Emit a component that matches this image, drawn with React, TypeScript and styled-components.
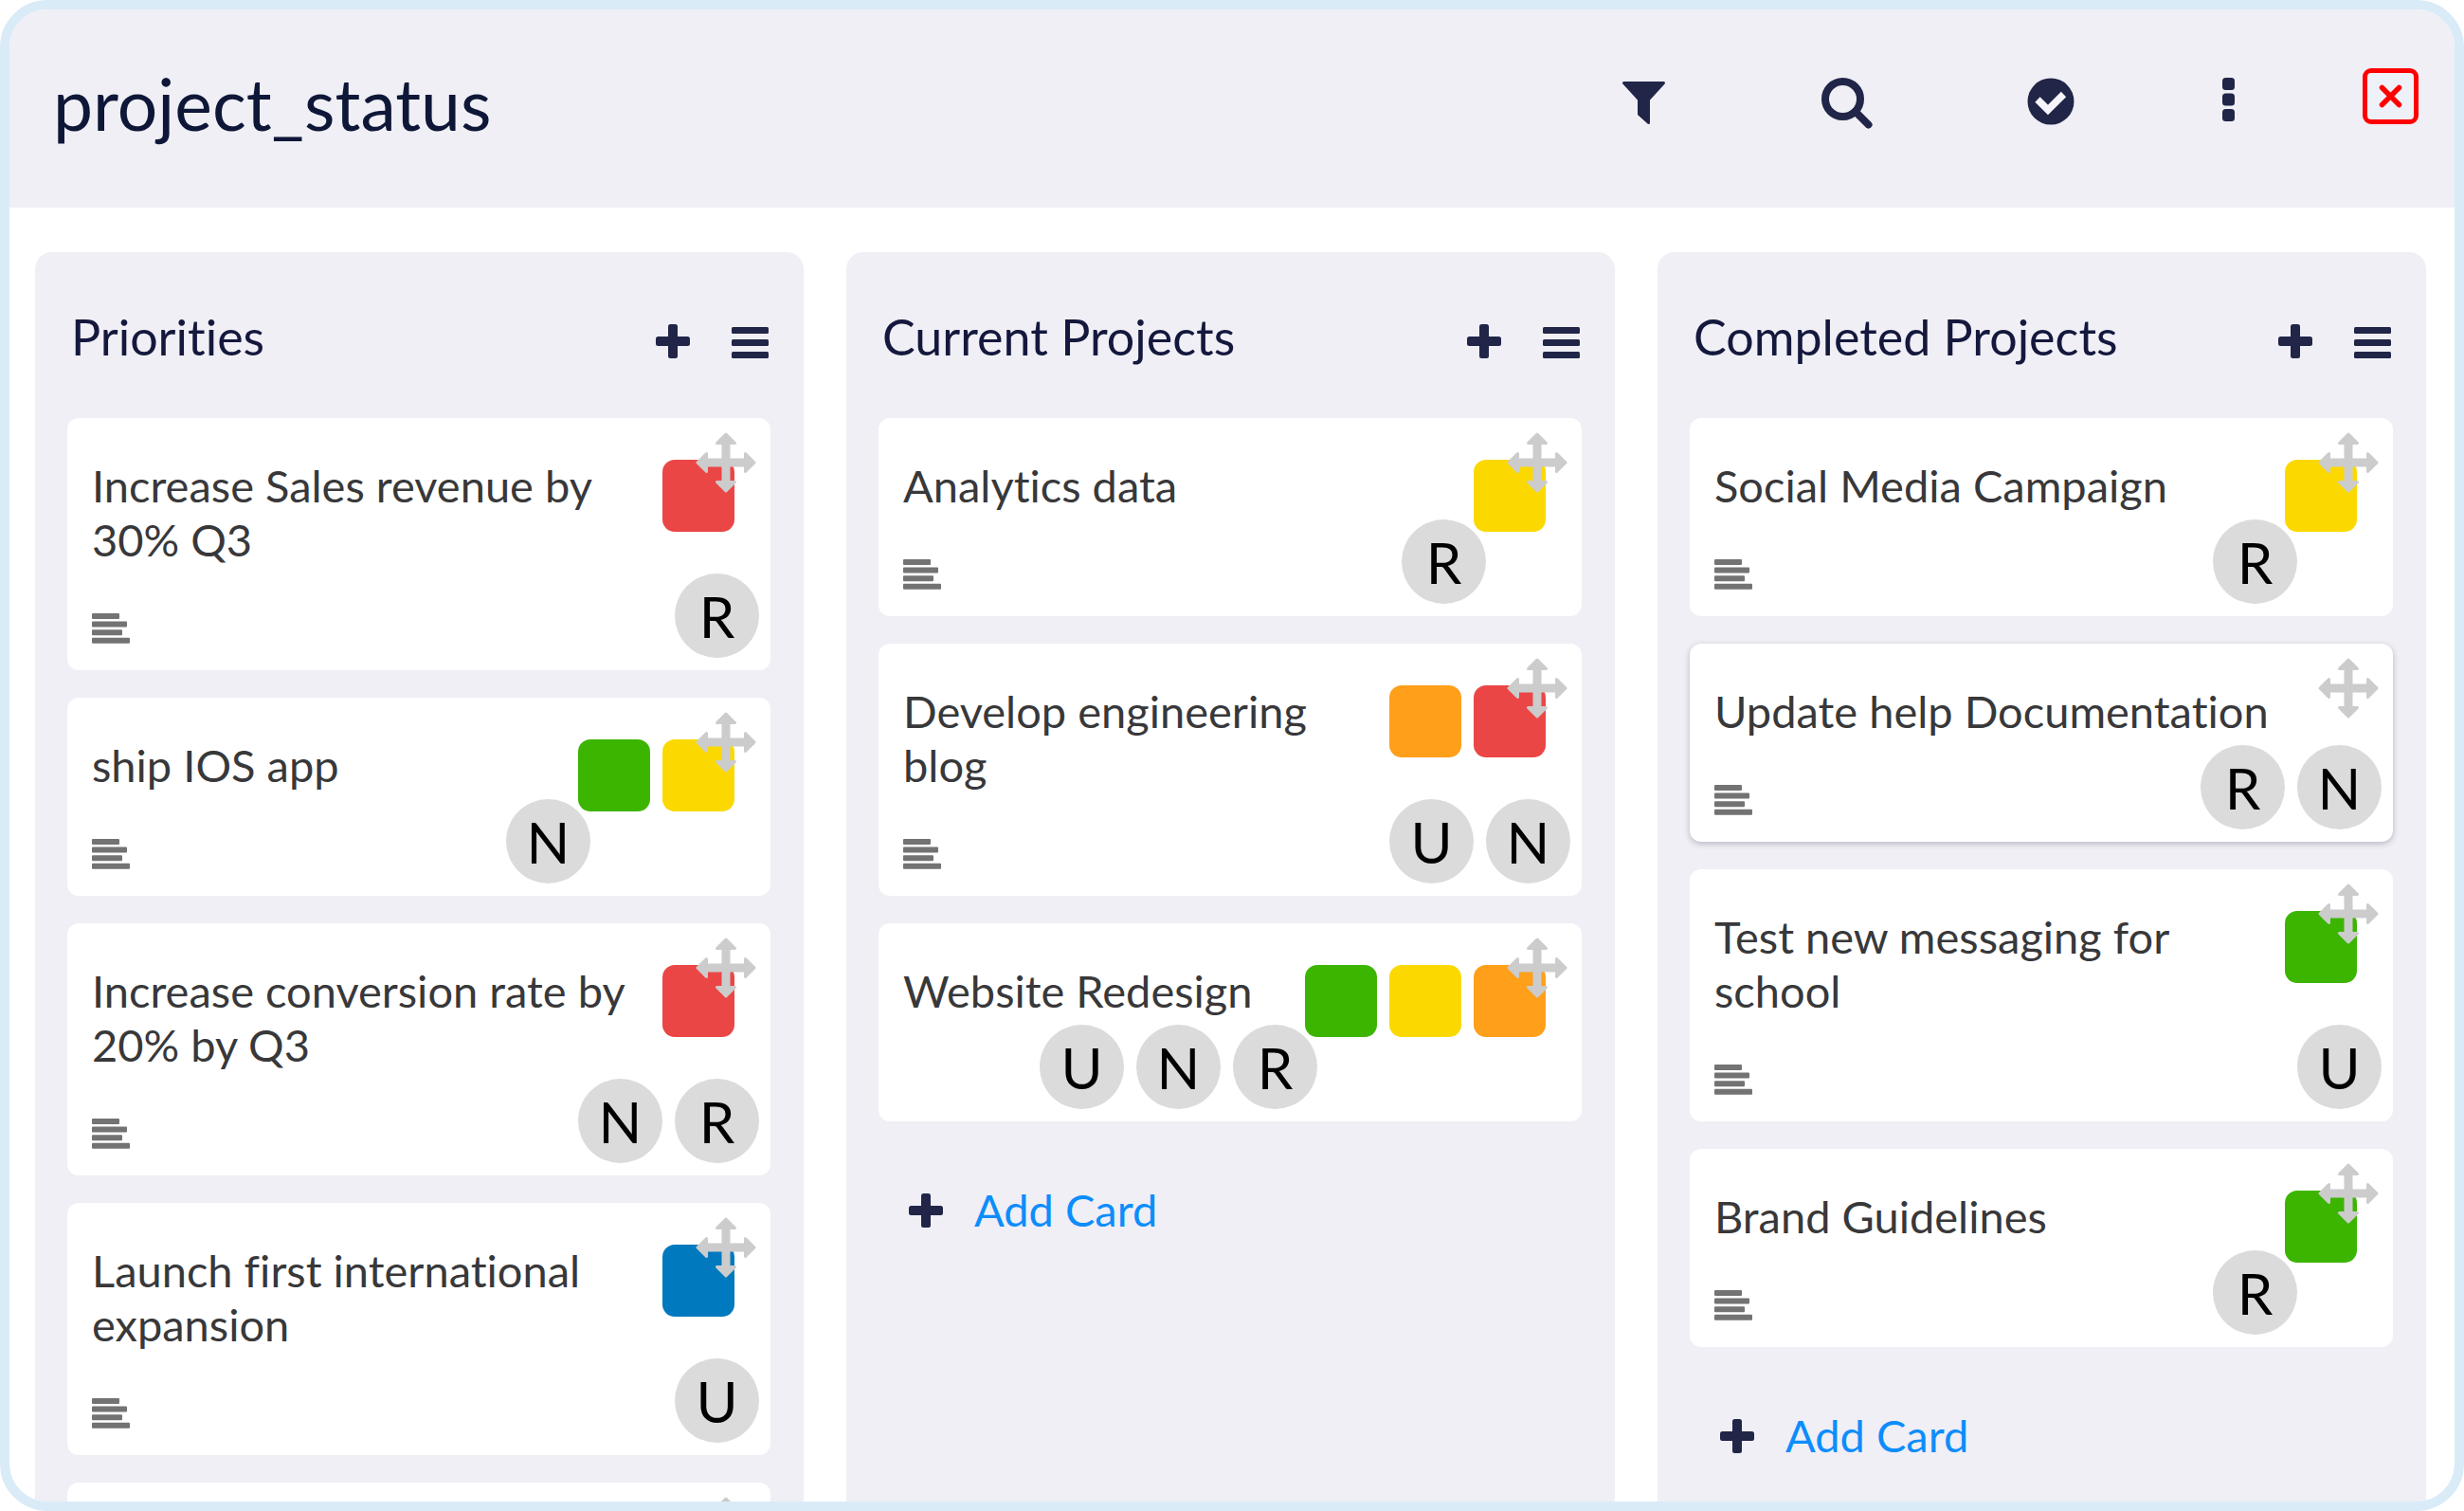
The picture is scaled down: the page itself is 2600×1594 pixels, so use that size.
import React from "react";
import styled, { createGlobalStyle } from "styled-components";

const font = `Lato, "Open Sans", "Noto Sans", sans-serif`;

const GlobalStyle = createGlobalStyle`
  *, *::before, *::after { box-sizing: border-box; }
  html, body { margin: 0; background: #fff; }
  body { font-family: ${font}; font-variant-ligatures: none; }
  button { font: inherit; border: 0; padding: 0; background: none; cursor: pointer; }
  h1, h2, h3, ul { margin: 0; padding: 0; font-weight: inherit; list-style: none; }
  svg { display: block; flex: none; }
`;

const Frame = styled.main`
  display: flex;
  flex-direction: column;
  height: 100vh;
  border: 10px solid #d9ebf7;
  border-radius: 50px;
  background: #fff;
  overflow: hidden;
`;

const Header = styled.header`
  display: flex;
  align-items: flex-start;
  justify-content: space-between;
  flex: none;
  height: 209px;
  padding: 54px 38px 0 46px;
  background: #efeff5;
`;

const BoardTitle = styled.h1`
  font-size: 75px;
  line-height: 90px;
  color: #0f1738;
`;

const Toolbar = styled.div`
  display: flex;
  align-items: flex-start;
  gap: 135px;
  padding-top: 8px;
`;

const Tools = styled.div<{ $gap: number }>`
  display: flex;
  align-items: flex-start;
  gap: ${(p) => p.$gap}px;
`;

const IconButton = styled.button`
  display: flex;
  align-items: center;
  justify-content: center;
  color: #212548;
`;

const ToolButton = styled(IconButton)<{ $width: number }>`
  width: ${(p) => p.$width}px;
  margin-top: 10px;
`;

const Board = styled.div`
  display: grid;
  grid-template-columns: repeat(3, 1fr);
  gap: 45px;
  flex: 1;
  min-height: 0;
  padding: 47px 30px 0 27px;
`;

const Column = styled.section`
  min-height: 0;
  padding: 47px 35px 0 34px;
  border-radius: 18px 18px 0 0;
  background: #efeff5;
`;

const ColumnHeader = styled.div`
  display: flex;
  align-items: center;
  gap: 44px;
  height: 94px;
  margin-bottom: 34px;
  padding: 0 2px 0 4px;
`;

const ColumnTitle = styled.h2`
  flex: 1;
  padding-bottom: 10px;
  font-size: 52px;
  line-height: 64px;
  color: #15183d;
`;

const CardList = styled.ul`
  display: flex;
  flex-direction: column;
  gap: 29px;
`;

const CardBox = styled.li<{ $raised?: boolean }>`
  position: relative;
  padding: 43px 12px 13px 26px;
  border-radius: 12px;
  background: #fff;
  box-shadow: ${(p) => (p.$raised ? "0 2px 6px rgba(40, 36, 70, 0.28)" : "none")};
`;

const CardTop = styled.div`
  display: flex;
  align-items: flex-start;
  gap: 20px;
  padding-right: 26px;
`;

const CardTitle = styled.h3`
  flex: 1;
  min-height: 57px;
  font-size: 47px;
  line-height: 57px;
  color: #38383a;
`;

const Labels = styled.div`
  display: flex;
  gap: 13px;
  height: 57px;
  padding-top: 1px;
`;

const Label = styled.span<{ $color: string }>`
  width: 76px;
  height: 76px;
  border-radius: 13px;
  background: ${(p) => p.$color};
`;

const MoveButton = styled(IconButton)`
  position: absolute;
  top: 15px;
  right: 15px;
  color: #ccc;
`;

const CardFooter = styled.div`
  position: relative;
  display: flex;
  align-items: flex-end;
  justify-content: space-between;
  height: 89px;
  margin-top: 7px;
`;

const DescriptionMark = styled.svg`
  width: 40px;
  height: 32px;
  margin-bottom: 15px;
  fill: #737373;
`;

const Avatars = styled.div<{ $labels: number }>`
  display: flex;
  gap: 13px;
  margin-left: auto;
  margin-right: ${(p) => p.$labels * 89}px;
`;

const Avatar = styled.span`
  display: flex;
  align-items: center;
  justify-content: center;
  width: 89px;
  height: 89px;
  border-radius: 50%;
  background: #dbdbdb;
  color: #000;
  font-size: 60px;
  line-height: 72px;
`;

const AddCard = styled.button`
  display: flex;
  align-items: center;
  gap: 33px;
  margin: 65px 0 0 32px;
  font-size: 47px;
  line-height: 57px;
  color: #0d8dfb;

  svg {
    color: #212548;
  }
`;

const FilterIcon = () => (
  <svg width="45" height="54" viewBox="0 0 45 54" fill="currentColor" stroke="currentColor" strokeWidth="3" strokeLinejoin="round">
    <path d="M1.500 5.500H43.500L27.500 23V47.500L17.500 38.500V23Z" />
  </svg>
);

const SearchIcon = () => (
  <svg width="54" height="54" viewBox="0 0 54 54" fill="none" stroke="currentColor" strokeWidth="8" strokeLinecap="round">
    <circle cx="22.5" cy="22.5" r="18.5" />
    <path d="M36.500 36.500L49.500 49.500" />
  </svg>
);

const CheckIcon = () => (
  <svg width="50" height="50" viewBox="0 0 50 50" fill="none">
    <circle cx="25" cy="25" r="24.500" fill="currentColor" />
    <path d="M11 23L22 34L38.500 17.500" stroke="#f4f4fa" strokeWidth="7.500" />
  </svg>
);

const MoreIcon = () => (
  <svg width="13" height="46" viewBox="0 0 13 46" fill="currentColor">
    <rect width="13" height="13" rx="3.500" />
    <rect y="16.500" width="13" height="13" rx="3.500" />
    <rect y="33" width="13" height="13" rx="3.500" />
  </svg>
);

const CloseIcon = () => (
  <svg width="59" height="59" viewBox="0 0 59 59" fill="none" stroke="#fe0000">
    <rect x="2.500" y="2.500" width="54" height="54" rx="6.500" strokeWidth="5" fill="#eff1f8" />
    <path d="M20.500 20.500L38.500 38.500M38.500 20.500L20.500 38.500" strokeWidth="5.500" strokeLinecap="round" />
  </svg>
);

const PlusIcon = () => (
  <svg width="36" height="36" viewBox="0 0 36 36" fill="currentColor">
    <rect x="13" width="10" height="36" rx="2.500" />
    <rect y="13" width="36" height="10" rx="2.500" />
  </svg>
);

const MenuIcon = () => (
  <svg width="39" height="36" viewBox="0 0 39 36" fill="currentColor">
    <rect y="3" width="39" height="7" rx="1.500" />
    <rect y="16" width="39" height="7" rx="1.500" />
    <rect y="29" width="39" height="7" rx="1.500" />
  </svg>
);

const MoveIcon = () => (
  <svg width="64" height="64" viewBox="0 0 64 64" fill="currentColor" stroke="currentColor" strokeWidth="3" strokeLinejoin="round">
    <path d="M32 2L41.500 11.500H35V29H52.500V22.500L62 32L52.500 41.500V35H35V52.500H41.500L32 62L22.500 52.500H29V35H11.500V41.500L2 32L11.500 22.500V29H29V11.500H22.500Z" />
  </svg>
);

const RED = "#eb4646";
const YELLOW = "#fbd900";
const GREEN = "#3cb500";
const ORANGE = "#ff9f1a";
const BLUE = "#0079bf";

type CardData = {
  title: string;
  labels: string[];
  people: string[];
  twoLines?: boolean;
  noDescription?: boolean;
  raised?: boolean;
};

type ColumnData = { title: string; canAdd: boolean; cards: CardData[] };

const columns: ColumnData[] = [
  {
    title: "Priorities",
    canAdd: false,
    cards: [
      { title: "Increase Sales revenue by 30% Q3", labels: [RED], people: ["R"], twoLines: true },
      { title: "ship IOS app", labels: [GREEN, YELLOW], people: ["N"] },
      { title: "Increase conversion rate by 20% by Q3", labels: [RED], people: ["N", "R"], twoLines: true },
      { title: "Launch first international expansion", labels: [BLUE], people: ["U"], twoLines: true },
      { title: "", labels: [], people: [] },
    ],
  },
  {
    title: "Current Projects",
    canAdd: true,
    cards: [
      { title: "Analytics data", labels: [YELLOW], people: ["R"] },
      { title: "Develop engineering blog", labels: [ORANGE, RED], people: ["U", "N"], twoLines: true },
      { title: "Website Redesign", labels: [GREEN, YELLOW, ORANGE], people: ["U", "N", "R"], noDescription: true },
    ],
  },
  {
    title: "Completed Projects",
    canAdd: true,
    cards: [
      { title: "Social Media Campaign", labels: [YELLOW], people: ["R"] },
      { title: "Update help Documentation", labels: [], people: ["R", "N"], raised: true },
      { title: "Test new messaging for school", labels: [GREEN], people: ["U"], twoLines: true },
      { title: "Brand Guidelines", labels: [GREEN], people: ["R"] },
    ],
  },
];

function Card({ card }: { card: CardData }) {
  return (
    <CardBox $raised={card.raised}>
      <CardTop>
        <CardTitle>{card.title}</CardTitle>
        {card.labels.length > 0 && (
          <Labels>
            {card.labels.map((color) => (
              <Label key={color} $color={color} />
            ))}
          </Labels>
        )}
      </CardTop>
      <CardFooter>
        {!card.noDescription && (
          <DescriptionMark viewBox="0 0 40 32" aria-hidden="true">
            <rect width="29" height="6" rx="1" />
            <rect y="8.600" width="37" height="6" rx="1" />
            <rect y="17.200" width="32" height="6" rx="1" />
            <rect y="25.800" width="40" height="6" rx="1" />
          </DescriptionMark>
        )}
        <Avatars $labels={card.twoLines ? 0 : card.labels.length}>
          {card.people.map((person) => (
            <Avatar key={person}>{person}</Avatar>
          ))}
        </Avatars>
      </CardFooter>
      <MoveButton aria-label="Move card">
        <MoveIcon />
      </MoveButton>
    </CardBox>
  );
}

export default function App() {
  return (
    <>
      <GlobalStyle />
      <Frame>
        <Header>
          <BoardTitle>project_status</BoardTitle>
          <Toolbar>
            <Tools $gap={154}>
              <Tools $gap={161}>
                <ToolButton $width={54} aria-label="Filter">
                  <FilterIcon />
                </ToolButton>
                <ToolButton $width={54} aria-label="Search">
                  <SearchIcon />
                </ToolButton>
                <ToolButton $width={54} aria-label="Done">
                  <CheckIcon />
                </ToolButton>
              </Tools>
              <ToolButton $width={13} aria-label="More">
                <MoreIcon />
              </ToolButton>
            </Tools>
            <IconButton aria-label="Close">
              <CloseIcon />
            </IconButton>
          </Toolbar>
        </Header>
        <Board>
          {columns.map((column) => (
            <Column key={column.title}>
              <ColumnHeader>
                <ColumnTitle>{column.title}</ColumnTitle>
                <IconButton aria-label="Add card">
                  <PlusIcon />
                </IconButton>
                <IconButton aria-label="Column menu">
                  <MenuIcon />
                </IconButton>
              </ColumnHeader>
              <CardList>
                {column.cards.map((card) => (
                  <Card key={card.title} card={card} />
                ))}
              </CardList>
              {column.canAdd && (
                <AddCard>
                  <PlusIcon />
                  Add Card
                </AddCard>
              )}
            </Column>
          ))}
        </Board>
      </Frame>
    </>
  );
}
